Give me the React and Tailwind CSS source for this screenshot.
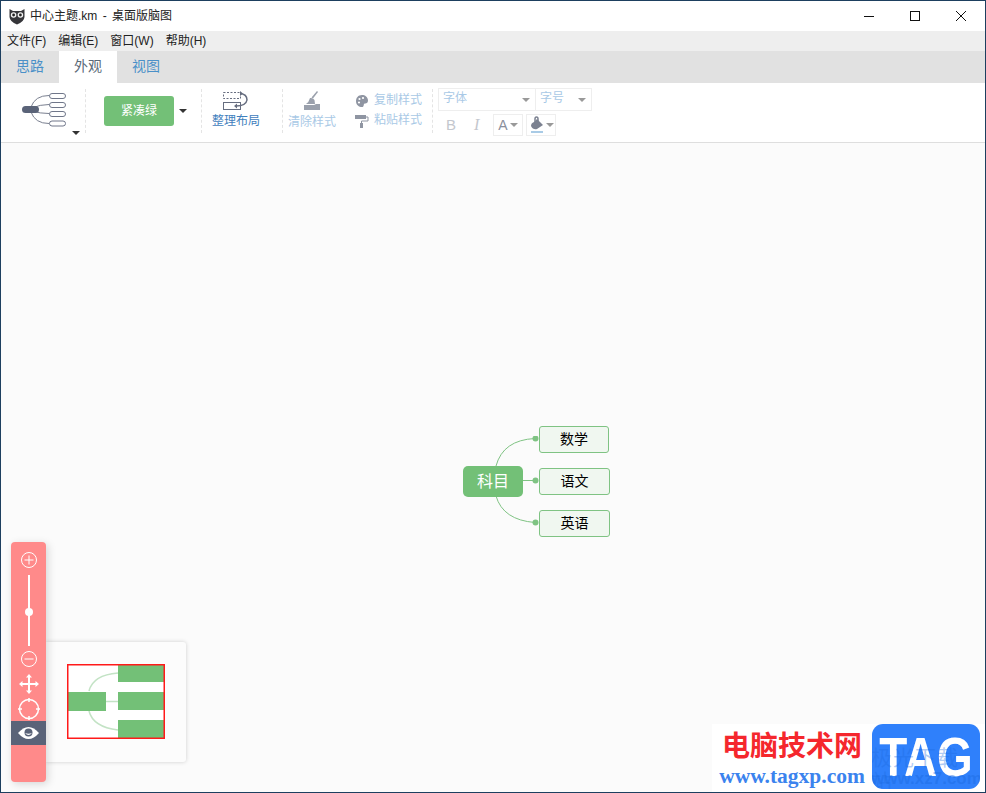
import React from 'react';

const cjk = { fontFamily: '"Liberation Sans", "Noto Sans CJK SC", sans-serif' };

function OwlLogo() {
	return (
		<svg width="16" height="17" viewBox="0 0 16 17">
			<path d="M0.500 1 L4 3 H12 L15.500 1 V9 Q15 14 8 16.500 Q1 14 0.500 9 Z" fill="#36363a" />
			<circle cx="4.600" cy="7" r="2.800" fill="#f2f2f2" />
			<circle cx="11.400" cy="7" r="2.800" fill="#f2f2f2" />
			<circle cx="4.600" cy="7" r="1.400" fill="#222" />
			<circle cx="11.400" cy="7" r="1.400" fill="#222" />
		</svg>
	);
}

function WindowButtons() {
	return (
		<div className="flex items-center">
			<svg width="46" height="30" viewBox="0 0 46 30"><path d="M18 15.500 H28" stroke="#111" strokeWidth="1" /></svg>
			<svg width="46" height="30" viewBox="0 0 46 30"><rect x="18.500" y="10.500" width="9" height="9" fill="none" stroke="#111" /></svg>
			<svg width="46" height="30" viewBox="0 0 46 30"><path d="M18 10 L28 20 M28 10 L18 20" stroke="#111" strokeWidth="1" /></svg>
		</div>
	);
}

function Caret({ color = '#333', className = '' }) {
	return <span className={`inline-block h-0 w-0 border-x-[4px] border-t-[4px] border-x-transparent ${className}`} style={{ borderTopColor: color }} />;
}

function Sep() {
	return <div className="h-[44px] w-0 border-l border-dashed border-[#e4e4e4]" />;
}

function LayoutIcon() {
	return (
		<svg width="44" height="34" viewBox="0 0 44 34" fill="none">
			<path d="M9 14 Q13 2.500 27 2.500 M10 15 Q18 11.500 27 11.500 M10 18 Q18 20.500 27 20.500 M9 19 Q13 30.500 27 30.500" stroke="#7a8090" strokeWidth="1" />
			<rect x="0" y="13" width="17" height="7" rx="3.500" fill="#5a6378" />
			<rect x="27.500" y="0.500" width="16" height="5" rx="2.500" fill="#fff" stroke="#70778a" />
			<rect x="27.500" y="9.500" width="16" height="5" rx="2.500" fill="#fff" stroke="#70778a" />
			<rect x="27.500" y="18.500" width="16" height="5" rx="2.500" fill="#fff" stroke="#70778a" />
			<rect x="27.500" y="28" width="16" height="5" rx="2.500" fill="#fff" stroke="#70778a" />
		</svg>
	);
}

function ArrangeIcon() {
	return (
		<svg width="26" height="20" viewBox="0 0 26 20" fill="none">
			<rect x="0.500" y="1.500" width="17" height="6" stroke="#666d7f" strokeDasharray="2 1.500" />
			<rect x="0.500" y="11.500" width="17" height="7" stroke="#666d7f" />
			<path d="M17 2.500 Q24 3 24 9 Q23 15 13 15" stroke="#666d7f" strokeWidth="1.500" />
			<path d="M17 0 L20 2.500 L17 5 Z M14 12.500 L11 15 L14 17.500 Z" fill="#666d7f" />
		</svg>
	);
}

function BroomIcon() {
	return (
		<svg width="18" height="20" viewBox="0 0 18 20" fill="#9aa0ac">
			<path d="M14 0 L15 1 L10 7.500 L8.500 6.500 Z" />
			<path d="M7 7 Q10 6.500 11.500 9 L12 13 H3 Q6 11 7 7 Z" />
			<path d="M1 14 H11 L13 13 H17 V19 H1 Z" />
			<path d="M12 13 L15 10 L17 13 Z" fill="#fff" />
		</svg>
	);
}

function PaletteIcon() {
	return (
		<svg width="14" height="14" viewBox="0 0 14 14">
			<path d="M7 1 C3 1 1 4 1 7 C1 11 4 13 7 13 C9 13 8.500 11 9 10 C9.500 9 13 10 13 6.500 C13 3 10 1 7 1 Z" fill="#8f95a2" />
			<circle cx="4.500" cy="5" r="1.100" fill="#fff" />
			<circle cx="8" cy="4" r="1.100" fill="#fff" />
			<circle cx="4" cy="8.500" r="1.100" fill="#fff" />
		</svg>
	);
}

function RollerIcon() {
	return (
		<svg width="14" height="14" viewBox="0 0 14 14" fill="none">
			<rect x="0" y="1" width="11" height="4" fill="#8f95a2" />
			<path d="M11 3 H13 V7 H6.500 V9" stroke="#8f95a2" />
			<rect x="5" y="9" width="3" height="5" fill="#8f95a2" />
		</svg>
	);
}

function FillIcon() {
	return (
		<svg width="16" height="18" viewBox="0 0 16 18">
			<path d="M8 3 L14 9 L8 13 Q4 14 2 10 Q2 7 5 6 Z" fill="#7b8190" />
			<path d="M6 7 V3 Q6 1 7.500 1 Q9 1 9 3 V6" fill="none" stroke="#7b8190" strokeWidth="1.500" />
			<rect x="2" y="15" width="12" height="2" fill="#a9cbe6" />
		</svg>
	);
}

function MindMapCanvas() {
	return (
		<div className="relative flex-1 bg-[#fbfbfb]">
			<svg className="absolute left-[462px] top-[293px]" width="80" height="110" viewBox="0 0 80 110" fill="none">
				<path d="M33 30 Q40 4 72 2.500" stroke="#7fc383" strokeWidth="1" />
				<path d="M60 44.500 H72" stroke="#7fc383" strokeWidth="1" />
				<path d="M33 60 Q40 84 72 86.500" stroke="#7fc383" strokeWidth="1" />
				<circle cx="72.500" cy="2.500" r="3" fill="#7fc383" />
				<circle cx="72.500" cy="44.500" r="3" fill="#7fc383" />
				<circle cx="72.500" cy="86.500" r="3" fill="#7fc383" />
			</svg>
			<div className="absolute left-[462px] top-[323px] flex h-[31px] w-[60px] items-center justify-center rounded-[5px] bg-[#73c077] text-[16px] text-white">科目</div>
			<div className="absolute left-[538px] top-[283px] flex h-[27px] w-[70px] items-center justify-center rounded-[3px] border border-[#7fc383] bg-[#f0f7f0] text-[14px] text-black">数学</div>
			<div className="absolute left-[538px] top-[325px] flex h-[27px] w-[71px] items-center justify-center rounded-[3px] border border-[#7fc383] bg-[#f0f7f0] text-[14px] text-black">语文</div>
			<div className="absolute left-[538px] top-[367px] flex h-[27px] w-[71px] items-center justify-center rounded-[3px] border border-[#7fc383] bg-[#f0f7f0] text-[14px] text-black">英语</div>
		</div>
	);
}

function ZoomPanel() {
	return (
		<div className="absolute left-[10px] top-[541px] flex h-[240px] w-[35px] flex-col items-center rounded-[4px] bg-[#ff8a8a] pt-[9px] shadow-[2px_2px_8px_rgba(0,0,0,0.15)]">
			<svg width="18" height="18" viewBox="0 0 18 18" fill="none" stroke="#fff">
				<circle cx="9" cy="9" r="7.500" />
				<path d="M4.500 9 H13.500 M9 4.500 V13.500" />
			</svg>
			<div className="relative mt-[6px] h-[71px] w-[2px] bg-white">
				<span className="absolute left-[-3px] top-[33px] h-[8px] w-[8px] rounded-full bg-white" />
			</div>
			<svg className="mt-[4px]" width="18" height="18" viewBox="0 0 18 18" fill="none" stroke="#fff">
				<circle cx="9" cy="9" r="7.500" />
				<path d="M4.500 9 H13.500" />
			</svg>
			<svg className="mt-[6px]" width="20" height="20" viewBox="0 0 20 20" fill="#fff">
				<path d="M10 0 L13 3.500 H11 V9 H16.500 V7 L20 10 L16.500 13 V11 H11 V16.500 H13 L10 20 L7 16.500 H9 V11 H3.500 V13 L0 10 L3.500 7 V9 H9 V3.500 H7 Z" />
			</svg>
			<svg className="mt-[4px]" width="22" height="22" viewBox="0 0 22 22" fill="none" stroke="#fff" strokeWidth="1.500">
				<circle cx="11" cy="11" r="9.500" />
				<path d="M11 0 V4 M11 18 V22 M0 11 H4 M18 11 H22" />
			</svg>
			<div className="mt-[1px] flex h-[24px] w-full items-center justify-center bg-[#5a6378]">
				<svg width="21" height="14" viewBox="0 0 21 14">
					<path d="M0 7 Q10.500 -5 21 7 Q10.500 19 0 7 Z" fill="#fff" />
					<circle cx="10.500" cy="6.500" r="4" fill="#5a6378" />
					<path d="M7 7 Q10.500 11 14 7 Q10.500 8.500 7 7 Z" fill="#fff" />
				</svg>
			</div>
		</div>
	);
}

function Navigator() {
	return (
		<div className="absolute left-[45px] top-[641px] flex h-[120px] w-[140px] items-center justify-center rounded-r-[3px] bg-[#fcfcfc] shadow-[0_0_4px_rgba(0,0,0,0.18)]">
			<svg className="ml-[-1px] mt-[-2px]" width="98" height="75" viewBox="0 0 98 75">
				<rect width="98" height="75" fill="#fff" />
				<path d="M22 27 Q26 11 51 9 M38 37.500 H51 M22 47 Q26 63 51 66" stroke="#c3e3c5" strokeWidth="1.500" fill="none" />
				<rect x="1" y="28" width="38" height="19" fill="#73c077" />
				<rect x="51" y="1" width="46" height="17" fill="#73c077" />
				<rect x="51" y="28" width="46" height="18" fill="#73c077" />
				<rect x="51" y="56" width="46" height="18" fill="#73c077" />
				<rect x="0.750" y="0.750" width="96.500" height="73.500" fill="none" stroke="#ff1a1a" strokeWidth="1.500" />
			</svg>
		</div>
	);
}

function Watermark() {
	return (
		<div className="absolute left-[711px] top-[723px] flex h-[68px] w-[274px] items-start bg-white/90">
			<div className="flex w-[160px] flex-col items-center">
				<span className="mt-[1px] text-[28px] font-bold leading-[38px] text-[#f5272d]" style={{ fontFamily: '"Noto Sans CJK SC", sans-serif' }}>电脑技术网</span>
				<span className="mt-[1px] text-[21.500px] font-bold leading-[24px] text-[#3b83ee]" style={{ fontFamily: '"Liberation Serif", serif' }}>www.tagxp.com</span>
			</div>
			<div className="relative flex h-[65px] w-[108px] items-center justify-center overflow-hidden rounded-[11px] bg-[#2f80fb]">
				<span className="inline-block scale-x-[0.82] text-[56px] font-bold leading-none text-white">TAG</span>
				<span className="absolute left-[-1px] top-[20px] text-[21px] leading-[24px] tracking-[1px] text-[#1c6be0]/35" style={{ fontFamily: '"Noto Sans CJK SC", sans-serif' }}>极光下载站</span>
				<span className="absolute left-[-1px] top-[46px] text-[17px] font-bold leading-[18px] text-[#1c6be0]/45">www.xz7.com</span>
			</div>
		</div>
	);
}

export default function App() {
	return (
		<div className="relative flex h-[793px] w-[986px] flex-col overflow-hidden border border-[#1d3f5f] bg-white" style={cjk}>
			<div className="flex h-[30px] shrink-0 items-center justify-between bg-white">
				<div className="flex items-center pl-[8px] text-[12px] text-[#222]">
					<OwlLogo />
					<span className="ml-[5px] [word-spacing:2px]">中心主题.km - 桌面版脑图</span>
				</div>
				<div className="mr-[1px]"><WindowButtons /></div>
			</div>
			<div className="flex h-[20px] shrink-0 items-center gap-[12px] bg-[#eeeeee] pl-[6px] text-[12px] text-[#222]">
				<span>文件(F)</span>
				<span>编辑(E)</span>
				<span>窗口(W)</span>
				<span>帮助(H)</span>
			</div>
			<div className="flex h-[32px] shrink-0 items-stretch bg-[#e1e1e1] pb-[2px] text-[14px]">
				<div className="flex w-[58px] items-center justify-center text-[#4a90c8]">思路</div>
				<div className="mb-[-2px] flex w-[58px] items-center justify-center bg-white pb-[2px] text-[#5a6a78]">外观</div>
				<div className="flex w-[58px] items-center justify-center text-[#4a90c8]">视图</div>
			</div>
			<div className="flex h-[60px] shrink-0 items-center border-b border-[#dedede] bg-white pb-[4px]">
				<div className="relative flex h-[44px] w-[84px] items-center pl-[21px] pb-[1px]">
					<LayoutIcon />
					<Caret className="absolute bottom-[-2px] left-[71px]" />
				</div>
				<Sep />
				<div className="flex w-[115px] items-center pl-[18px]">
					<div className="flex h-[30px] w-[70px] items-center justify-center rounded-[3px] bg-[#73c077] text-[12px] text-white">紧凑绿</div>
					<Caret className="ml-[5px]" />
				</div>
				<Sep />
				<div className="flex w-[80px] flex-col items-center pr-[12px]">
					<ArrangeIcon />
					<span className="mt-[1px] text-[12px] leading-[18px] text-[#3f80bd]">整理布局</span>
				</div>
				<Sep />
				<div className="flex w-[60px] flex-col items-center pr-[2px]">
					<BroomIcon />
					<span className="mt-[3px] text-[12px] leading-[16px] text-[#a9c9e6]">清除样式</span>
				</div>
				<div className="flex w-[89px] flex-col gap-[3px] pl-[12px] text-[12px] leading-[17px] text-[#a9c9e6]">
					<div className="flex items-center gap-[5px]"><PaletteIcon /><span>复制样式</span></div>
					<div className="flex items-center gap-[5px]"><RollerIcon /><span>粘贴样式</span></div>
				</div>
				<Sep />
				<div className="ml-[5px] mt-[3px] flex flex-col gap-[3px]">
					<div className="flex">
						<div className="flex h-[23px] w-[98px] items-center justify-between border border-[#eeeeee] pl-[4px] pr-[5px] text-[12px] text-[#a9c9e6]">
							<span className="mt-[-3px]">字体</span>
							<Caret color="#999" />
						</div>
						<div className="flex h-[23px] w-[56px] items-center justify-between border border-l-0 border-[#eeeeee] pl-[4px] pr-[5px] text-[12px] text-[#a9c9e6]">
							<span className="mt-[-3px]">字号</span>
							<Caret color="#999" />
						</div>
					</div>
					<div className="flex items-center">
						<span className="w-[27px] pl-[8px] text-[15px] leading-[22px] text-[#c4c7ce]">B</span>
						<span className="w-[28px] pl-[9px] text-[16px] italic leading-[22px] text-[#c4c7ce]" style={{ fontFamily: '"Liberation Serif", serif' }}>I</span>
						<div className="flex h-[22px] w-[30px] items-center justify-center gap-[2px] border border-[#eeeeee] text-[14px] text-[#8a8f9c]">
							A<Caret color="#999" />
						</div>
						<div className="ml-[3px] flex h-[22px] w-[30px] items-center justify-center gap-[1px] border border-[#eeeeee]">
							<FillIcon /><Caret color="#999" />
						</div>
					</div>
				</div>
			</div>
			<MindMapCanvas />
			<Navigator />
			<ZoomPanel />
			<Watermark />
		</div>
	);
}
